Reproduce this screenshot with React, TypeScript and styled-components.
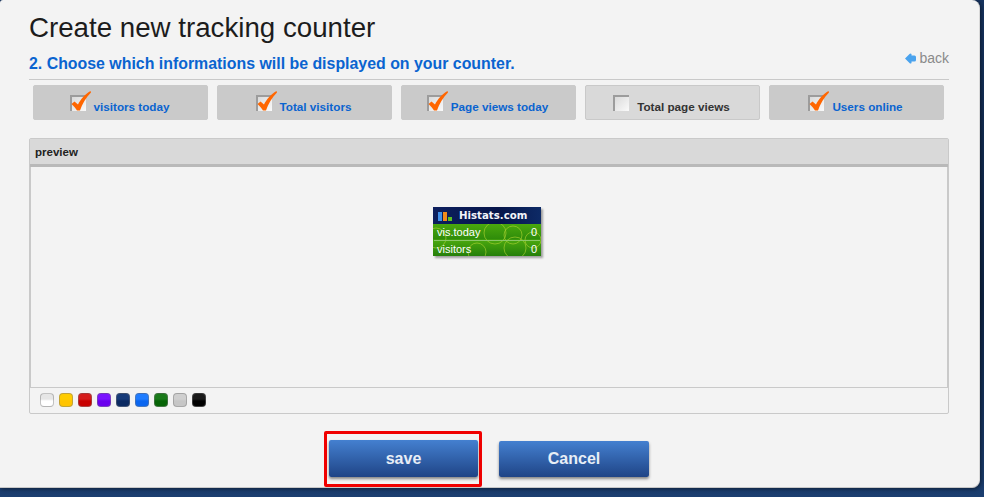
import React from 'react';
import styled, { createGlobalStyle } from 'styled-components';

const GlobalStyle = createGlobalStyle`
  html, body {
    margin: 0;
    padding: 0;
    width: 984px;
    height: 497px;
    overflow: hidden;
    font-family: "Liberation Sans", Arial, sans-serif;
  }
`;

const Page = styled.div`
  width: 984px;
  height: 497px;
  background: linear-gradient(to bottom, #16335f, #0e2444 60%, #1b3e70);
  overflow: hidden;
`;

const Card = styled.div`
  box-sizing: border-box;
  width: 980px;
  height: 488px;
  padding: 0 30px 0 29px;
  background: #f3f3f3;
  border-right: 1px solid #d8d8d8;
  border-bottom: 1px solid #c8c8c8;
  border-radius: 3px 8px 8px 0;
  box-shadow: 1px 1px 4px rgba(0, 0, 0, 0.5);
`;

const Title = styled.h1`
  margin: 0;
  padding-top: 12px;
  height: 41px;
  font-size: 27.7px;
  line-height: 32px;
  font-weight: 400;
  color: #1c1c1c;
`;

const StepRow = styled.div`
  box-sizing: border-box;
  display: flex;
  justify-content: space-between;
  align-items: flex-end;
  height: 27px;
  border-bottom: 1px solid #c9c9c9;
  padding-bottom: 5px;
`;

const StepText = styled.h2`
  margin: 0;
  font-size: 15.9px;
  line-height: 20px;
  font-weight: 700;
  color: #0a64d0;
`;

const BackLink = styled.a`
  display: flex;
  align-items: center;
  gap: 3px;
  margin-bottom: 8px;
  font-size: 14px;
  line-height: 16px;
  color: #8a8a8a;
`;

const Tabs = styled.div`
  display: flex;
  gap: 9px;
  padding: 5px 0 0 4px;
`;

const Tab = styled.div<{ $checked: boolean }>`
  box-sizing: border-box;
  display: flex;
  justify-content: center;
  align-items: flex-start;
  gap: 2px;
  width: 175px;
  height: 35px;
  padding: 5px 2px 0 0;
  background: ${p => (p.$checked ? '#cacaca' : '#d9d9d9')};
  border: 1px solid ${p => (p.$checked ? '#cacaca' : '#c9c9c9')};
  border-radius: 2px;
`;

const TabLabel = styled.span<{ $checked: boolean }>`
  padding-top: 9px;
  font-size: 11.7px;
  line-height: 14px;
  font-weight: 700;
  color: ${p => (p.$checked ? '#0a64d0' : '#333333')};
`;

const CheckWrap = styled.span`
  display: block;
  width: 22px;
  height: 22px;
  flex: none;
`;

const Panel = styled.section`
  box-sizing: border-box;
  height: 276px;
  margin-top: 18px;
  display: flex;
  flex-direction: column;
  border: 1px solid #c9c9c9;
  border-radius: 2px;
`;

const PanelHeader = styled.div`
  box-sizing: border-box;
  height: 28px;
  padding: 6px 5px 0;
  background: #d9d9d9;
  border-bottom: 3px solid #b9b9b9;
  font-size: 11.5px;
  line-height: 14px;
  font-weight: 700;
  color: #222222;
`;

const PanelBody = styled.div`
  flex: 1;
  display: flex;
  justify-content: center;
  padding: 40px 4px 0 0;
  border-left: 1px solid #c9c9c9;
  border-right: 1px solid #c9c9c9;
`;

const Palette = styled.div`
  box-sizing: border-box;
  height: 26px;
  display: flex;
  align-items: center;
  gap: 5px;
  padding: 0 0 2px 10px;
  border-top: 1px solid #c9c9c9;
`;

const Swatch = styled.span<{ $top: string; $bottom: string }>`
  box-sizing: border-box;
  width: 14px;
  height: 14px;
  border-radius: 4px;
  border: 1px solid rgba(120, 120, 120, 0.45);
  background: linear-gradient(to bottom, ${p => p.$top} 42%, ${p => p.$bottom} 58%);
`;

const Badge = styled.div`
  position: relative;
  width: 108px;
  height: 49px;
  box-shadow: 2px 2px 2px rgba(0, 0, 0, 0.35);
  background: linear-gradient(
    to bottom,
    #062a5c 0,
    #062a5c 17px,
    #4aa80e 17px,
    #2f8c0a 32px,
    #4aa80e 33px,
    #257f0a 49px
  );
  overflow: hidden;
`;

const BadgeHead = styled.div`
  box-sizing: border-box;
  height: 17px;
  display: flex;
  align-items: center;
  gap: 5px;
  padding-left: 5px;
  background: linear-gradient(to right, #0d1f5e, #06154a 60%, #0d2a66);
`;

const BadgeBrand = styled.span`
  font-family: "DejaVu Sans", sans-serif;
  font-size: 10.2px;
  line-height: 17px;
  font-weight: 700;
  color: #f2f4fa;
`;

const BadgeLine = styled.div`
  position: relative;
  box-sizing: border-box;
  height: 15.5px;
  display: flex;
  justify-content: space-between;
  padding: 1px 4px 0;
  font-size: 11px;
  line-height: 14px;
  color: #ffffff;
`;

const BadgeRule = styled.div`
  position: relative;
  height: 1px;
  margin: 0 1px;
  background: #8cc868;
`;

const Rings = styled.svg`
  position: absolute;
  left: 0;
  top: 17px;
`;

const Actions = styled.div`
  display: flex;
  justify-content: center;
  align-items: flex-start;
  gap: 17px;
  padding: 17px 0 0 0;
  margin-left: -5px;
`;

const SaveOutline = styled.div`
  box-sizing: border-box;
  width: 158px;
  height: 56px;
  padding: 6px 0 0 2px;
  border: 3px solid #f00000;
  border-radius: 2px;
`;

const Button = styled.button<{ $wide?: boolean }>`
  display: block;
  width: ${p => (p.$wide ? '150px' : '149px')};
  height: ${p => (p.$wide ? '36px' : '37px')};
  margin-top: ${p => (p.$wide ? '10px' : '0')};
  padding: 0;
  border: 0;
  border-radius: 2px;
  background: linear-gradient(to bottom, #4480d0, #1f4486);
  box-shadow: 0 2px 3px rgba(0, 0, 0, 0.45);
  font-family: inherit;
  font-size: 16px;
  font-weight: 700;
  color: #e8eef6;
`;

const tabs = [
  { label: 'visitors today', checked: true },
  { label: 'Total visitors', checked: true },
  { label: 'Page views today', checked: true },
  { label: 'Total page views', checked: false },
  { label: 'Users online', checked: true },
];

const swatches = [
  ['#e6e6e6', '#ffffff'],
  ['#ffcc00', '#ffc400'],
  ['#d51c1c', '#c80000'],
  ['#7a14ff', '#6a00ee'],
  ['#173a78', '#0b2a62'],
  ['#1f7cff', '#0a66f0'],
  ['#1a7a1a', '#066406'],
  ['#cfcfcf', '#c6c6c6'],
  ['#1a1a1a', '#000000'],
];

const CheckBox: React.FC<{ checked: boolean }> = ({ checked }) => (
  <CheckWrap>
    <svg width="22" height="22" viewBox="0 0 22 22">
      <defs>
        <linearGradient id="boxFill" x1="0" y1="0" x2="1" y2="1">
          <stop offset="0" stopColor="#d8d8d8" />
          <stop offset="1" stopColor="#fafafa" />
        </linearGradient>
      </defs>
      <rect x="1" y="5" width="15" height="15" fill="url(#boxFill)" />
      <path d="M1 20V5h15" fill="none" stroke="#9c9c9c" strokeWidth="2" />
      {checked && (
        <path
          d="M1.5 13 L4.5 10.5 L8 13.5 C10.5 8.5 15 3 20.5 0 L21 1.5 C16 6.5 12 13 10 19.5 L7 19.5 C5.5 17 3.5 15 1.5 13 Z"
          fill="#ff6600"
        />
      )}
    </svg>
  </CheckWrap>
);

const App: React.FC = () => (
  <Page>
    <GlobalStyle />
    <Card>
      <Title>Create new tracking counter</Title>
      <StepRow>
        <StepText>2. Choose which informations will be displayed on your counter.</StepText>
        <BackLink>
          <svg width="11" height="11" viewBox="0 0 11 11">
            <path
              d="M0 5.5 L4.5 1 Q5.5 0 6.5 1 V2.5 H9.5 Q11 2.5 11 4 V7 Q11 8.5 9.5 8.5 H6.5 V10 Q5.5 11 4.5 10 Z"
              fill="#4aa3ee"
            />
          </svg>
          back
        </BackLink>
      </StepRow>
      <Tabs>
        {tabs.map(tab => (
          <Tab key={tab.label} $checked={tab.checked}>
            <CheckBox checked={tab.checked} />
            <TabLabel $checked={tab.checked}>{tab.label}</TabLabel>
          </Tab>
        ))}
      </Tabs>
      <Panel>
        <PanelHeader>preview</PanelHeader>
        <PanelBody>
          <Badge>
            <BadgeHead>
              <svg width="16" height="10" viewBox="0 0 16 10">
                <rect x="0" y="1" width="4" height="9" fill="#3f8fe8" />
                <rect x="5" y="1" width="4" height="9" fill="#f08a1c" />
                <rect x="10" y="6" width="4" height="4" fill="#5fc020" />
              </svg>
              <BadgeBrand>Histats.com</BadgeBrand>
            </BadgeHead>
            <Rings width="108" height="32" viewBox="0 0 108 32" fill="none" stroke="#a8d030" strokeOpacity="0.65">
              <circle cx="62" cy="9" r="11" />
              <circle cx="80" cy="11" r="9" />
              <circle cx="82" cy="24" r="11" />
              <circle cx="44" cy="28" r="9" />
              <circle cx="100" cy="16" r="8" />
              <circle cx="3" cy="14" r="10" />
            </Rings>
            <BadgeLine>
              <span>vis.today</span>
              <span>0</span>
            </BadgeLine>
            <BadgeRule />
            <BadgeLine>
              <span>visitors</span>
              <span>0</span>
            </BadgeLine>
          </Badge>
        </PanelBody>
        <Palette>
          {swatches.map(([top, bottom]) => (
            <Swatch key={top} $top={top} $bottom={bottom} />
          ))}
        </Palette>
      </Panel>
      <Actions>
        <SaveOutline>
          <Button>save</Button>
        </SaveOutline>
        <Button $wide>Cancel</Button>
      </Actions>
    </Card>
  </Page>
);

export default App;
